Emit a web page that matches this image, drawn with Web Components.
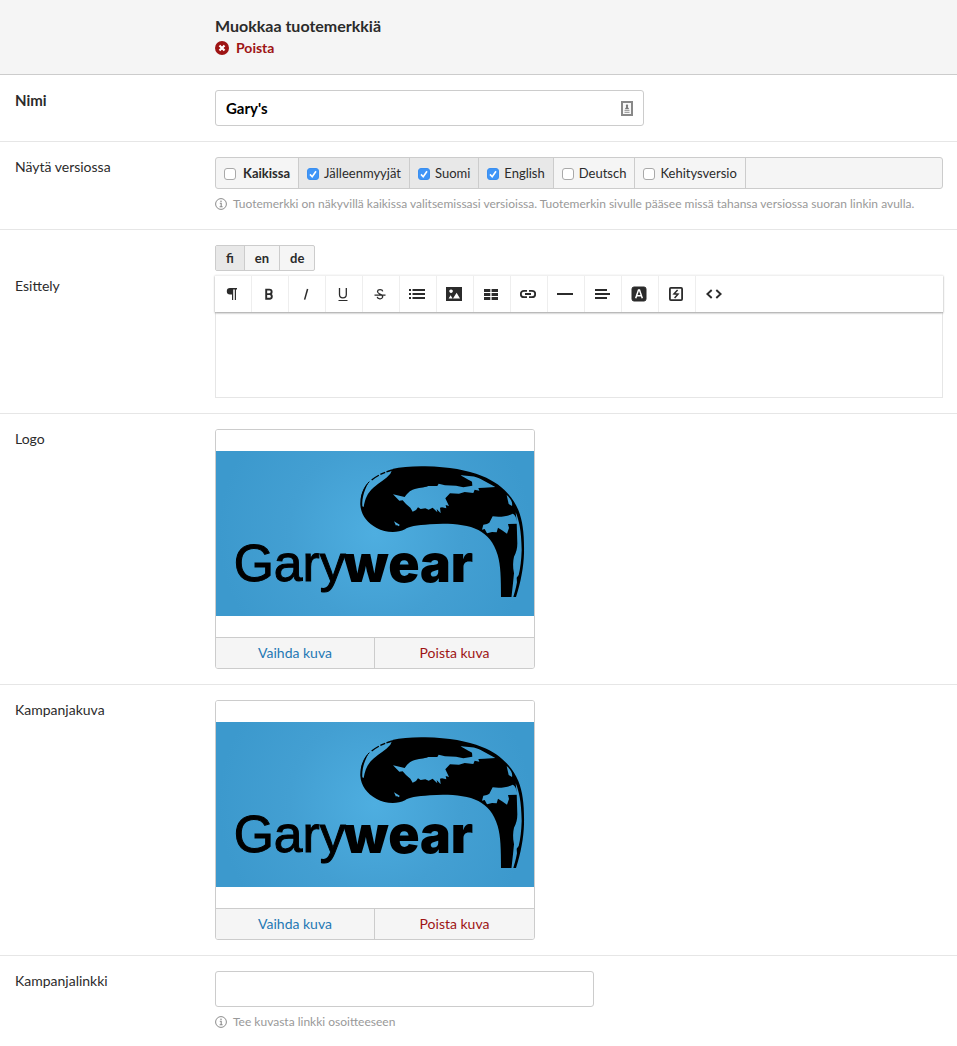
<!DOCTYPE html>
<html lang="fi">
<head>
<meta charset="utf-8">
<title>Muokkaa tuotemerkkiä</title>
<style>
  body { margin: 0; background: #fff; color: #2b2b2b; font: 14px/20px Lato, "Liberation Sans", sans-serif; }
</style>
</head>
<body>
<brand-form></brand-form>

<template id="t-header">
  <style>
    :host { display: block; box-sizing: border-box; padding: 15px 14px 16px 215px; background: #f5f5f5; border-bottom: 1px solid #ccc; }
    h1 { margin: 0; font-size: 16px; line-height: 22px; font-weight: 700; }
  </style>
  <h1><slot name="title"></slot></h1>
  <slot></slot>
</template>

<template id="t-row">
  <style>
    :host { display: grid; grid-template-columns: 200px minmax(0, 1fr); padding: 15px 14px 15px 15px; border-bottom: 1px solid #e6e6e6; }
    :host(:last-of-type) { border-bottom: 0; }
    .label { font-size: 14px; line-height: 20px; }
    :host([strong]) .label { font-size: 15px; font-weight: 700; }
    :host([offset]) .label { padding-top: 31px; }
  </style>
  <div class="label"><slot name="label"></slot></div>
  <div><slot></slot></div>
</template>

<template id="t-hint">
  <style>
    :host { display: flex; gap: 6px; align-items: center; margin: 7px 0 2px; color: #999; font-size: 12px; line-height: 16px; }
    svg { display: block; flex: none; }
  </style>
  <svg width="12" height="12" viewBox="0 0 12 12" fill="none" stroke="#8c8c8c" aria-hidden="true"><circle cx="6" cy="6" r="5.4"/><path d="M4.8 5.2H6.2V8.6M4.6 8.7H7.6" stroke-width="1.1"/><circle cx="6" cy="3.2" r=".8" fill="#8c8c8c" stroke="none"/></svg>
  <span><slot></slot></span>
</template>

<template id="t-option">
  <style>
    :host { display: block; border-right: 1px solid #ccc; font-size: 13px; line-height: 30px; }
    :host([checked]) { background: #e8e8e8; }
    :host([strong]) { font-weight: 700; }
    label { display: flex; align-items: center; gap: 5px; padding: 0 8px; }
    :host([strong]) label { gap: 7px; }
    input { appearance: none; box-sizing: border-box; width: 12px; height: 12px; margin: 2px 0 0; border: 1px solid #a9a9a9; border-radius: 3px; background: #fff; }
    input:checked { border-color: #3b8ff0; background: #3f95f7 url("data:image/svg+xml,%3Csvg xmlns='http://www.w3.org/2000/svg' viewBox='0 0 10 10'%3E%3Cpath d='M2 5.4 4.2 7.8 8 2.2' fill='none' stroke='white' stroke-width='1.6'/%3E%3C/svg%3E") center / 10px 10px no-repeat; }
  </style>
  <label><input type="checkbox"><span><slot></slot></span></label>
</template>

<template id="t-options">
  <style>
    :host { display: flex; flex-wrap: wrap; border: 1px solid #ccc; border-radius: 3px; background: #f5f5f5; overflow: hidden; }
  </style>
  <slot></slot>
</template>

<template id="t-tabs">
  <style>
    :host { display: flex; width: fit-content; margin-bottom: 4px; border: 1px solid #ccc; border-radius: 2px; background: #f5f5f5; overflow: hidden; }
    button { padding: 0 10px; border: 0; border-left: 1px solid #ccc; background: none; color: inherit; font: 700 13px/24px Lato, sans-serif; }
    button:first-child { border-left: 0; background: #e8e8e8; }
  </style>
  <div role="tablist" style="display: flex"></div>
</template>

<template id="t-editor">
  <style>
    :host { display: block; }
    .bar { display: flex; height: 36px; border-top: 1px solid #f0f0f0; background: #fff; box-shadow: 0 1px 2px rgba(0, 0, 0, .4); position: relative; }
    button { display: grid; place-items: center; box-sizing: border-box; width: 37px; height: 36px; padding: 0 2px 0 0; border: 0; border-right: 1px solid #eee; background: none; color: #2b2b2b; }
    button:last-child { border-right: 0; }
    svg { display: block; }
  </style>
  <div class="bar" role="toolbar"></div>
  <slot></slot>
</template>

<template id="t-image">
  <style>
    :host { display: block; box-sizing: border-box; max-width: 320px; border: 1px solid #ccc; border-radius: 3px; overflow: hidden; }
    .frame { padding: 21px 0; background: #fff; }
    .frame svg { display: block; width: 100%; }
    .actions { display: grid; grid-template-columns: 1fr 1fr; border-top: 1px solid #ccc; background: #f5f5f5; }
    button { padding: 0; border: 0; background: none; color: #1f78b4; font: 14px/30px Lato, sans-serif; }
    button:first-child { border-right: 1px solid #ccc; }
    button:last-child { color: #9e1414; }
  </style>
  <div class="frame">
    <svg viewBox="-402 -12 954 495" role="img" aria-label="Garywear">
      <defs><radialGradient id="sky" gradientUnits="userSpaceOnUse" cx="75" cy="235" r="470"><stop offset="0" stop-color="#4eaee0"/><stop offset=".55" stop-color="#439fd2"/><stop offset="1" stop-color="#3c99cd"/></radialGradient></defs>
      <rect x="-402" y="-12" width="954" height="495" fill="url(#sky)"/>
      <path d="M31 150C29 118 45 90 66 72C100 42 150 33 225 34C300 36 350 45 396 63C450 84 487 122 505 165C519 200 523 240 522 295C521 335 513 380 498 426L453 426C453 370 452 330 443 300C432 262 412 240 385 225C350 207 290 204 240 208C200 211 175 215 165 223C140 236 105 233 80 219C50 203 33 178 31 150Z"/>
      <g fill="url(#sky)">
        <path d="M129 118L164 126C170 118 175 110 188 104C206 97 222 99 235 93L262 93L266 86L285 91L318 92L340 97L367 92L366 80C352 72 345 70 332 60C355 64 375 62 392 72L436 96L402 98L385 99L388 107L374 104L370 114L344 111L327 116L300 115L286 130L297 153L287 150L289 160L276 157L270 158L272 175L260 162L262 172L248 158L236 164L226 160L212 162L204 157L198 165L188 170L181 158L168 147L158 136L148 137Z"/>
        <path d="M37 154C35 126 45 100 60 74L88 50L130 36L121 56C108 72 88 82 70 98C52 114 45 132 41 156Z"/>
        <path d="M470 120C484 132 488 144 486 153L476 147Z"/>
        <path d="M428 184C450 187 475 184 488 176C496 178 500 192 503 206L474 207L477 219L471 236L456 226L444 218L440 232L426 231L411 235L404 222L396 224L400 209L411 207L418 203Z"/>
        <path d="M132 199L149 209L147 214L140 210L138 212Z"/>
        <path d="M497 172C507 196 514 225 515 285C514 315 511 340 506 360L500 368L501 382C498 400 493 415 489 430L484 430L489 385L492 355C488 335 489 318 492 305C499 293 502 280 502 265L500 200Z"/>
      </g>
      <path d="M34 130C37 110 44 94 58 80" fill="none" stroke="#000" stroke-width="3"/>
      <path d="M65 75C82 61 103 52 126 45" fill="none" stroke="#000" stroke-width="4" stroke-dasharray="26 5 16 4 20"/>
      <text x="-349" y="379" font-family="Liberation Sans" font-size="155" stroke="#000" stroke-width="3">Gary</text>
      <text x="-20" y="380" font-family="Inter" font-weight="900" font-size="155">wear</text>
    </svg>
  </div>
  <div class="actions"><button type="button">Vaihda kuva</button><button type="button">Poista kuva</button></div>
</template>

<template id="t-form">
  <style>
    :host { display: block; }
    form { margin: 0; }
    .remove { display: flex; width: fit-content; align-items: center; gap: 7px; color: #9e1414; font-weight: 700; font-size: 14px; line-height: 21px; text-decoration: none; }
    .remove svg { display: block; }
    input, textarea { display: block; box-sizing: border-box; width: 100%; border: 1px solid #ccc; background: #fff; color: #000; }
    input { height: 36px; padding: 0 10px; border-radius: 3px; font: 700 15px/20px Lato, sans-serif; }
    textarea { height: 86px; margin: 0; padding: 10px; border-color: #e6e6e6; border-top: 0; resize: none; font: 14px/20px Lato, sans-serif; }
    .name { display: grid; max-width: 429px; align-items: center; }
    .name > * { grid-area: 1 / 1; }
    .name svg { justify-self: end; margin-right: 11px; }
    .link { max-width: 379px; }
  </style>
  <form>
    <page-header>
      <span slot="title">Muokkaa tuotemerkkiä</span>
      <a class="remove" href="#"><svg width="14" height="14" viewBox="0 0 14 14" aria-hidden="true"><circle cx="7" cy="7" r="7" fill="#9e1414"/><path d="M4.5 4.5 9.5 9.5M9.5 4.5 4.5 9.5" stroke="#fff" stroke-width="2.2"/></svg>Poista</a>
    </page-header>
    <form-row strong>
      <label slot="label" for="name">Nimi</label>
      <div class="name">
        <input id="name" type="text" value="Gary's">
        <svg width="12" height="15" viewBox="0 0 12 15" aria-hidden="true"><rect x="1" y="1" width="10" height="13" fill="#f8f8f8" stroke="#888" stroke-width="2"/><path d="M6 3 7.2 4.5 6.8 6 8.3 8.2H3.7L5.2 6 4.8 4.5Z" fill="#777"/><path d="M3.5 9.6H8.5M3.5 11.4H8.5" stroke="#999"/></svg>
      </div>
    </form-row>
    <form-row>
      <span slot="label">Näytä versiossa</span>
      <version-options role="group" aria-label="Näytä versiossa">
        <version-option strong>Kaikissa</version-option><version-option checked>Jälleenmyyjät</version-option><version-option checked>Suomi</version-option><version-option checked>English</version-option><version-option>Deutsch</version-option><version-option>Kehitysversio</version-option>
      </version-options>
      <field-hint>Tuotemerkki on näkyvillä kaikissa valitsemissasi versioissa. Tuotemerkin sivulle pääsee missä tahansa versiossa suoran linkin avulla.</field-hint>
    </form-row>
    <form-row offset>
      <label slot="label" for="intro">Esittely</label>
      <language-tabs langs="fi en de"></language-tabs>
      <rich-editor><textarea id="intro"></textarea></rich-editor>
    </form-row>
    <form-row>
      <span slot="label">Logo</span>
      <image-card></image-card>
    </form-row>
    <form-row>
      <span slot="label">Kampanjakuva</span>
      <image-card></image-card>
    </form-row>
    <form-row>
      <label slot="label" for="link">Kampanjalinkki</label>
      <input class="link" id="link" type="text">
      <field-hint>Tee kuvasta linkki osoitteeseen</field-hint>
    </form-row>
  </form>
</template>

<script>
  const define = (name, id, setup) => customElements.define(name, class extends HTMLElement {
    constructor() {
      super();
      this.attachShadow({ mode: "open" }).append(document.getElementById(id).content.cloneNode(true));
    }
    connectedCallback() {
      if (this.ready) return;
      this.ready = true;
      if (setup) setup(this, this.shadowRoot);
    }
  });

  const tools = [
    ["Kappale", '<path d="M6 2H13V3.4H12V14H10.8V3.4H9.2V14H8V8.4H6A3.2 3.2 0 0 1 6 2Z" fill="currentColor" stroke="none"/>'],
    ["Lihavointi", '<path d="M5.2 3.6H8.4A2.2 2.2 0 0 1 8.4 8.1H5.2ZM5.2 8.1H8.9A2.4 2.4 0 0 1 8.9 12.8H5.2Z" stroke-width="1.9"/>'],
    ["Kursivointi", '<path d="M9.6 3 6.6 13.6" stroke-width="1.5"/>'],
    ["Alleviivaus", '<path d="M4.5 2V8.4A3.4 3.4 0 0 0 11.3 8.4V2" stroke-width="1.3"/><path d="M3.5 14.5H12.5"/>'],
    ["Yliviivaus", '<path d="M10.7 5.4C10.4 3.2 5.8 3.1 5.5 5.4C5.4 7 7 7.5 8 8.2M8 8.2C10 9 11 9.8 10.6 11.2C10 13.6 5.6 13.3 5.2 10.9M2.5 9.2H13.5" stroke-width="1.3"/>'],
    ["Luettelo", '<path d="M0 4H2M0 8H2M0 12H2M3.5 4H16M3.5 8H16M3.5 12H16" stroke-width="2"/>'],
    ["Kuva", '<path fill="currentColor" stroke="none" fill-rule="evenodd" d="M0 1H16V15H0ZM5 3.4A1.8 1.8 0 1 0 5.1 3.4ZM2.6 12.5H6.6L4.6 9.2ZM7 12.5H14L10.6 6.8Z"/>'],
    ["Taulukko", '<path d="M1 4.5H7.3M8.6 4.5H15M1 8.5H7.3M8.6 8.5H15M1 12.5H7.3M8.6 12.5H15" stroke-width="2.9"/>'],
    ["Linkki", '<path d="M7 4.8H4A3.2 3.2 0 0 0 4 11.2H7M9 4.8H12A3.2 3.2 0 0 1 12 11.2H9M5 8H11" stroke-width="1.8"/>'],
    ["Viiva", '<path d="M0 8H16" stroke-width="2"/>'],
    ["Tasaus", '<path d="M1 4H13M1 8H16M1 12H13" stroke-width="2"/>'],
    ["Väri", '<rect x="1" y="1" width="14" height="14" rx="2" fill="currentColor"/><path d="M4.7 12.3 7.5 4H8.5L11.3 12.3M5.8 9.7H10.2" stroke="#fff" stroke-width="1.5"/>'],
    ["Upota", '<rect x="1.9" y="1.9" width="12.2" height="12.2" rx="1" stroke-width="1.8"/><path d="M9.6 4 6 7.8 10 8.2 6.6 12" stroke-width="1.5"/>'],
    ["HTML", '<path d="M5.7 4 1.4 8 5.7 12M10.3 4 14.6 8 10.3 12" stroke-width="1.9"/>']
  ];

  define("page-header", "t-header");
  define("form-row", "t-row");
  define("field-hint", "t-hint");
  define("version-options", "t-options");
  define("version-option", "t-option", (host, root) => {
    const box = root.querySelector("input");
    box.checked = host.hasAttribute("checked");
    box.addEventListener("change", () => host.toggleAttribute("checked", box.checked));
  });
  define("language-tabs", "t-tabs", (host, root) => {
    root.querySelector("div").innerHTML = host.getAttribute("langs").split(" ")
      .map((l, i) => `<button type="button" role="tab" aria-selected="${i === 0}">${l}</button>`).join("");
  });
  define("rich-editor", "t-editor", (host, root) => {
    root.querySelector(".bar").innerHTML = tools.map(([name, shape]) =>
      `<button type="button" aria-label="${name}"><svg width="16" height="16" viewBox="0 0 16 16" fill="none" stroke="currentColor" stroke-width="1">${shape}</svg></button>`).join("");
  });
  define("image-card", "t-image");
  define("brand-form", "t-form");
</script>
</body>
</html>
